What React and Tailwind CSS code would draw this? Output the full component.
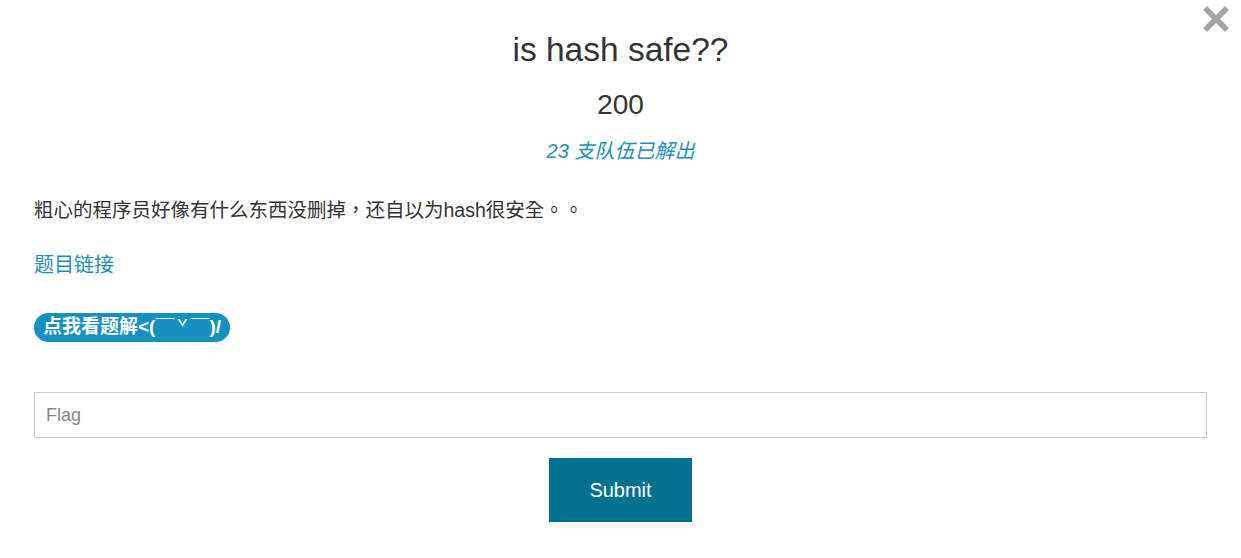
import React from "react";

const font = { fontFamily: '"Liberation Sans", "Noto Sans CJK SC", sans-serif' };

const CloseIcon = () => (
  <svg width="26" height="26" viewBox="0 0 26 26" className="absolute top-[6px] right-[12px]">
    <path d="M4 4 L22 22 M22 4 L4 22" stroke="#a3a3a3" strokeWidth="5.5" strokeLinecap="square" />
  </svg>
);

export default function App() {
  return (
    <div className="relative w-[1241px] h-[558px] bg-white text-[#333]" style={font}>
      <CloseIcon />
      <div className="px-[34px]">
        <h1 className="pt-[30px] text-center text-[33.5px] leading-[40px] text-[#333]">is hash safe??</h1>
        <div className="mt-[15px] text-center text-[28px] leading-[40px] text-[#333]">200</div>
        <div className="mt-[11px] text-center text-[20px] leading-[30px] italic text-[#1d8fb6]">
          23 支队伍已解出
        </div>
        <p className="mt-[29px] font-['Liberation_Sans','Noto_Sans_CJK_TC',sans-serif] text-[19.5px] leading-[30px] text-[#333]">
          粗心的程序员好像有什么东西没删掉，还自以为hash很安全。。
        </p>
        <a className="mt-[25px] block w-fit text-[20px] leading-[30px] text-[#1d8fb6]">题目链接</a>
        <button className="mt-[33px] flex h-[29px] items-center rounded-full bg-[#1590c0] pl-[9px] pr-[9px] text-[19px] font-bold text-white">
          点我看题解&lt;(
          <span className="flex font-['Noto_Sans_CJK_SC',sans-serif] font-normal">
            <span className="w-[19px] text-center">￣</span>
            <span className="w-[16px] text-center">ˇ</span>
            <span className="w-[19px] text-center">￣</span>
          </span>
          )/
        </button>
        <input
          type="text"
          placeholder="Flag"
          className="mt-[50px] block h-[46px] w-full border border-[#ccc] px-[11px] text-[18px] text-[#333] placeholder:text-[#888] outline-none"
        />
        <div className="mt-[20px] flex justify-center">
          <button className="h-[64px] w-[143px] bg-[#00718f] text-[20px] text-white">Submit</button>
        </div>
      </div>
    </div>
  );
}
